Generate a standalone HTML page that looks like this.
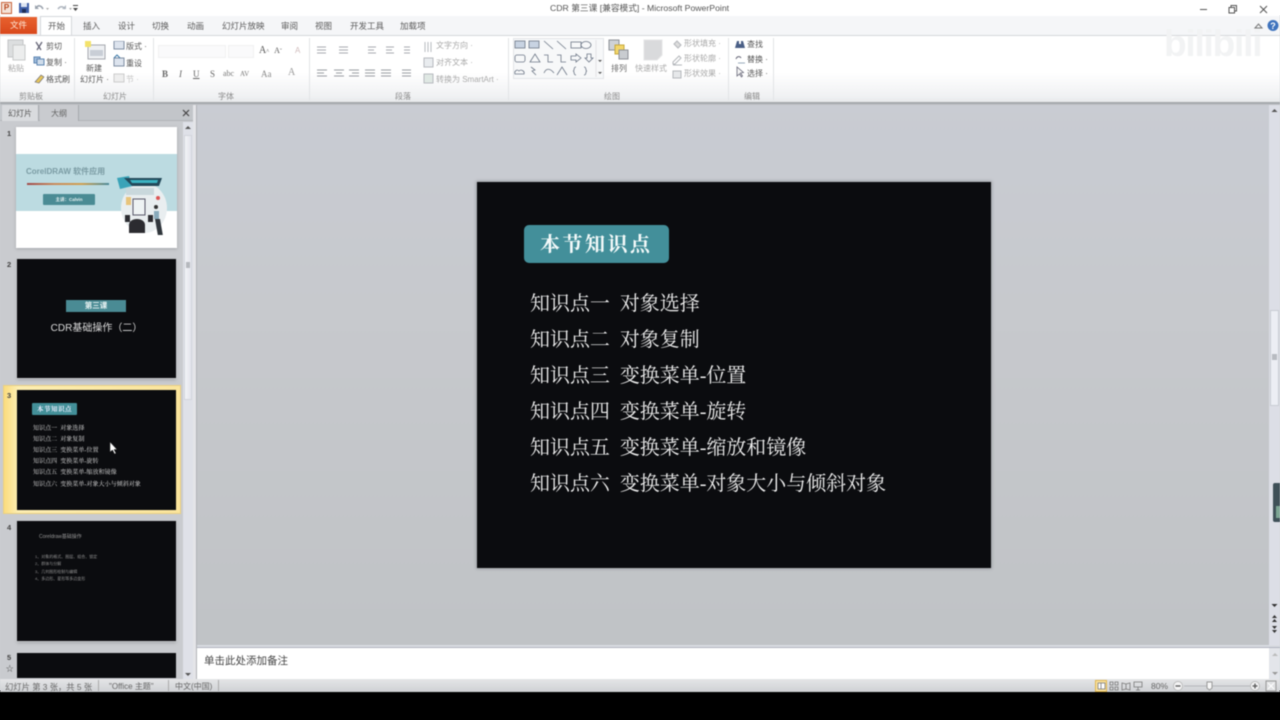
<!DOCTYPE html>
<html lang="zh"><head><meta charset="utf-8"><style>
html,body{margin:0;padding:0;height:720px;background:linear-gradient(#fff 0,#fff 15px,#d0d2d6 15px,#d0d2d6 690px,#000 690px,#000 720px)}
#r{position:relative;width:1280px;height:720px;overflow:hidden;background:#c6c8cc;font-family:"Liberation Sans","Noto Sans CJK SC",sans-serif;color:#555;filter:blur(.45px)}
#r div,#r span.a,#r svg{position:absolute}
.t{white-space:nowrap;font-size:8px;line-height:10px;margin-top:1px}
.tab{white-space:nowrap;font-size:8.5px;line-height:12px;top:20px;color:#5a5a5a}
.g{white-space:nowrap;font-size:8px;line-height:10px;top:92px;color:#8a8a8a}
.l{color:#a9a9a9}
.sep{width:1px;top:38px;height:62px;background:#e2e4e6}
.m{font-family:"Liberation Serif","Noto Serif CJK SC",serif;color:#f0f0f0;font-size:20px;line-height:26px;white-space:nowrap;left:530px;letter-spacing:-.03px}
.num{left:6px;font-size:7.5px;font-weight:bold;color:#444;line-height:10px}
.th{left:17px;width:159px;height:119px;background:#0b0c0f;box-shadow:0 0 0 1px #c4c6c9,0 2px 3px #a2a4a8}
.s3{color:#dcdcdc;font-size:6.05px;line-height:7px;white-space:nowrap;left:33px;font-family:"Liberation Serif","Noto Serif CJK SC",serif}
.s4{color:#8f8f8f;font-size:4px;line-height:5px;white-space:nowrap;left:35px}
</style></head><body><div id="r">

<!-- title bar -->
<div style="left:0;top:0;width:1280px;height:16px;background:#fff"></div>
<div style="left:1px;top:2px;width:9px;height:10px;background:#f4e3d8;border:1px solid #c8643a;color:#b8441a;font-size:8px;line-height:10px;text-align:center;font-weight:bold">P</div>
<svg style="left:19px;top:2px" width="60" height="12" viewBox="0 0 60 12"><rect x="0" y="1" width="10" height="10" fill="#3f5fa8"/><rect x="2" y="1" width="6" height="4" fill="#dfe6f2"/><rect x="3" y="7" width="4" height="4" fill="#1f2f58"/><path d="M17 6c2-3 5-3 7 1" fill="none" stroke="#9aa2ad" stroke-width="1.6"/><path d="M16 3v4h4z" fill="#9aa2ad"/><path d="M46 7c-2-3-5-3-7 0" fill="none" stroke="#b0b7c0" stroke-width="1.6"/><path d="M47 3v4h-4z" fill="#b0b7c0"/><path d="M27 6h3l-1.500 2zM50 6h3l-1.500 2z" fill="#aaa"/></svg>
<svg style="left:72px;top:4px" width="7" height="8" viewBox="0 0 7 8"><path d="M1 1h5v1H1zM1 4h5L3.500 7z" fill="#444"/></svg>
<div class="t" style="left:550px;top:2px;font-size:8.7px;color:#555">CDR 第三课 [兼容模式] - Microsoft PowerPoint</div>
<svg style="left:1190px;top:2px" width="90" height="14" viewBox="0 0 90 14"><path d="M10 7.500h7" stroke="#555" stroke-width="1"/><path d="M39 5.500h5.500v5.500H39zM41 5.500V3.500h5.500V9h-2" fill="none" stroke="#555"/><path d="M70 4l7 7M77 4l-7 7" stroke="#555" stroke-width="1"/></svg>

<!-- tab row -->
<div style="left:0;top:16px;width:1280px;height:19px;background:#f5f6f8"></div>
<div style="left:0;top:17px;width:37px;height:17px;background:linear-gradient(#e8622f,#d9481c);color:#ffe9d8;font-size:8.5px;line-height:17px;text-align:center">文件</div>
<div style="left:40px;top:16px;width:32px;height:20px;background:#fff;border:1px solid #d4d7db;border-bottom:0;box-sizing:border-box"></div>
<div class="tab" style="left:48px">开始</div>
<div class="tab" style="left:83px">插入</div>
<div class="tab" style="left:118px">设计</div>
<div class="tab" style="left:152px">切换</div>
<div class="tab" style="left:187px">动画</div>
<div class="tab" style="left:222px">幻灯片放映</div>
<div class="tab" style="left:281px">审阅</div>
<div class="tab" style="left:315px">视图</div>
<div class="tab" style="left:350px">开发工具</div>
<div class="tab" style="left:400px">加载项</div>
<svg style="left:1250px;top:19px" width="30" height="14" viewBox="0 0 30 14"><path d="M5 9l3.500-4L12 9z" fill="none" stroke="#777"/><circle cx="23" cy="6.500" r="5.500" fill="#3f73bd"/><text x="23" y="10" text-anchor="middle" font-size="9" font-weight="bold" fill="#fff" font-family="Liberation Sans">?</text></svg>

<!-- ribbon -->
<div style="left:0;top:35px;width:1280px;height:68px;background:linear-gradient(#fff 0,#fff 55%,#f0f1f3 90%,#e6e8ea 100%);border-top:1px solid #d5d7da;box-sizing:border-box"></div>
<div style="left:0;top:102px;width:1280px;height:2px;background:#a5a8ac"></div>
<div style="left:0;top:104px;width:1280px;height:1px;background:#bfc2c6"></div>

<!-- bilibili watermark -->
<div style="left:1164px;top:23px;font-size:37px;line-height:42px;font-weight:bold;color:#f2f3f4;letter-spacing:-1.200px;white-space:nowrap">bilibili</div>

<!-- clipboard -->
<svg style="left:7px;top:39px" width="20" height="22" viewBox="0 0 20 22"><rect x="1" y="1" width="15" height="17" fill="#dcdedf" stroke="#c2c4c6"/><rect x="6" y="6" width="12" height="15" fill="#eceded" stroke="#c8caca"/></svg>
<div class="t l" style="left:8px;top:63px">粘贴</div>
<svg style="left:33px;top:41px" width="12" height="44" viewBox="0 0 12 44"><path d="M3 1l5 8M9 1L4 9" stroke="#667" stroke-width="1.300"/><rect x="1" y="16" width="6" height="6" fill="#9dbbdc" stroke="#5d84b0"/><rect x="4" y="18" width="7" height="6" fill="#cfdcea" stroke="#5d84b0"/><path d="M2 41l6-7 3 2-5 6z" fill="#e5c55b" stroke="#667" stroke-width=".6"/></svg>
<div class="t" style="left:46px;top:41px">剪切</div>
<div class="t" style="left:46px;top:57px">复制 ·</div>
<div class="t" style="left:46px;top:74px">格式刷</div>
<div class="g" style="left:19px">剪贴板</div>
<div class="sep" style="left:74px"></div>

<!-- slides -->
<svg style="left:84px;top:40px" width="22" height="20" viewBox="0 0 22 20"><rect x="4" y="5" width="17" height="14" fill="#eef0f3" stroke="#a5a8ae"/><rect x="6" y="10" width="13" height="6" fill="#c9ced6"/><path d="M1 1h6v6H1z" fill="#f3e26b"/></svg>
<div class="t" style="left:86px;top:63px;color:#555">新建</div>
<div class="t" style="left:80px;top:74px">幻灯片 ·</div>
<svg style="left:113px;top:41px" width="12" height="46" viewBox="0 0 12 46"><rect x="1" y="0" width="10" height="8" fill="#dde4ee" stroke="#7f8ea3"/><rect x="1" y="17" width="10" height="8" fill="#dde4ee" stroke="#7f8ea3"/><path d="M1 17l3-3 3 3" fill="none" stroke="#3c78a8"/><rect x="1" y="33" width="10" height="8" fill="#eee" stroke="#ccc"/></svg>
<div class="t" style="left:126px;top:41px">版式 ·</div>
<div class="t" style="left:126px;top:58px">重设</div>
<div class="t l" style="left:126px;top:74px;color:#c5c5c5">节 ·</div>
<div class="g" style="left:103px">幻灯片</div>
<div class="sep" style="left:153px"></div>

<!-- font -->
<div style="left:158px;top:45px;width:68px;height:13px;background:#fafafb;border:1px solid #f0f1f2;box-sizing:border-box"></div>
<div style="left:228px;top:45px;width:26px;height:13px;background:#fafafb;border:1px solid #f0f1f2;box-sizing:border-box"></div>
<div class="t" style="left:259px;top:45px;font-family:'Liberation Serif',serif;font-size:10px">A<span style="font-size:6px">^</span>&nbsp; <span style="font-size:8px">A</span><span style="font-size:6px">ˇ</span></div>
<div class="t l" style="left:295px;top:45px;color:#d0bcbc">A</div>
<div class="t" style="left:162px;top:68px;font-family:'Liberation Serif',serif;font-size:9px;color:#666"><b>B</b></div>
<div class="t" style="left:179px;top:68px;font-family:'Liberation Serif',serif;font-size:9px;color:#666"><i>I</i></div>
<div class="t" style="left:193px;top:68px;font-family:'Liberation Serif',serif;font-size:9px;color:#666"><u>U</u></div>
<div class="t" style="left:210px;top:68px;font-family:'Liberation Serif',serif;font-size:9px;color:#666">S</div>
<div class="t" style="left:223px;top:68px;font-family:'Liberation Serif',serif;font-size:8px;color:#777">abc</div>
<div class="t" style="left:240px;top:68px;font-family:'Liberation Serif',serif;font-size:7px;color:#777">AV</div>
<div class="t" style="left:261px;top:68px;font-family:'Liberation Serif',serif;font-size:9px;color:#888">Aa</div>
<div class="t" style="left:288px;top:67px;font-family:'Liberation Serif',serif;font-size:10px;color:#999">A</div>
<div class="g" style="left:218px">字体</div>
<div class="sep" style="left:309px"></div>

<!-- paragraph -->
<svg style="left:316px;top:45px" width="104" height="36" viewBox="0 0 104 36" stroke="#a8abb0" fill="none"><path d="M1 2h9M1 5h9M1 8h9M23 2h9M23 5h9M23 8h9M52 2h8M52 5h6M52 8h8M70 2h8M70 5h6M70 8h8M88 2h6M88 5h6M88 8h6"/><path d="M1 25h10M1 28h7M1 31h10M18 25h10M20 28h6M18 31h10M33 25h10M36 28h7M33 31h10M49 25h10M49 28h10M49 31h10M65 25h10M65 28h10M65 31h10M86 25h9M86 28h9M86 31h9" stroke="#9a9da3"/></svg>
<svg style="left:423px;top:41px" width="12" height="46" viewBox="0 0 12 46" fill="none" stroke="#b7babf"><path d="M2 1v10M5 1v10M8 1v10"/><rect x="1" y="17" width="9" height="9" fill="#e9ecef"/><rect x="1" y="33" width="9" height="9" fill="#dfe8e3"/></svg>
<div class="t l" style="left:436px;top:40px">文字方向 ·</div>
<div class="t l" style="left:436px;top:57px">对齐文本 ·</div>
<div class="t l" style="left:436px;top:74px">转换为 SmartArt ·</div>
<div class="g" style="left:395px">段落</div>
<div class="sep" style="left:508px"></div>

<!-- shapes gallery -->
<div style="left:513px;top:38px;width:91px;height:41px;background:#f7f8f9;border:1px solid #e3e5e8;box-sizing:border-box"></div>
<svg style="left:514px;top:40px" width="92" height="38" viewBox="0 0 92 38" fill="none" stroke="#6c7686" stroke-width=".8"><rect x="1" y="1" width="10" height="7" fill="#c8d3e2"/><rect x="15" y="1" width="10" height="7" fill="#c8d3e2"/><path d="M30 1l9 8M43 1l9 8"/><rect x="57" y="2" width="10" height="6"/><ellipse cx="72" cy="5" rx="5" ry="3.500"/><rect x="1" y="15" width="10" height="7" rx="2"/><path d="M16 22l5-8 5 8zM30 15h4v7h5M43 15h4v7h5M57 16h5v-2l5 4-5 4v-2h-5zM73 14h4v4h2l-4 4-4-4h2z"/><path d="M1 34c-1-3 2-5 4-3 2-2 6 0 5 3zM17 27l4 3-3 1 4 4M30 33c2-5 6-5 10 0M43 35l5-8 5 8M62 27c-3 0-1 4-3 4 2 0 0 4 3 4M70 27c3 0 1 4 3 4-2 0 0 4-3 4"/><path d="M82 -2v39" stroke="#dcdfe3"/><path d="M84 20h4l-2 2zM84 32h4l-2 2z" fill="#555" stroke="none"/></svg>
<svg style="left:608px;top:38px" width="22" height="24" viewBox="0 0 22 24"><rect x="1" y="2" width="10" height="10" fill="#cfd2d6" stroke="#8d9096"/><rect x="7" y="7" width="9" height="9" fill="#f3d66a" stroke="#c7a83d"/><rect x="11" y="12" width="9" height="9" fill="#c9ccd0" stroke="#8d9096"/></svg>
<div class="t" style="left:611px;top:63px;color:#666">排列</div>
<svg style="left:641px;top:38px" width="24" height="24" viewBox="0 0 24 24"><path d="M3 2h18v15l-5 5H3z" fill="#d9dadc" stroke="#e4e5e6"/></svg>
<div class="t l" style="left:635px;top:63px">快速样式</div>
<svg style="left:672px;top:39px" width="11" height="42" viewBox="0 0 11 42" fill="none" stroke="#b4b7bb"><path d="M2 5l3-3 4 4-3 3z" fill="#ddd"/><path d="M1 23l6-6 2 2-6 6h-2zM1 26h9"/><rect x="1" y="32" width="8" height="7" fill="#e6e8ea"/></svg>
<div class="t l" style="left:684px;top:38px">形状填充 ·</div>
<div class="t l" style="left:684px;top:53px">形状轮廓 ·</div>
<div class="t l" style="left:684px;top:68px">形状效果 ·</div>
<div class="g" style="left:604px">绘图</div>
<div class="sep" style="left:728px"></div>

<!-- edit -->
<svg style="left:734px;top:39px" width="12" height="40" viewBox="0 0 12 40" fill="none"><path d="M1 9l2-7h2v3h2V2h2l2 7z" fill="#4a5f86"/><path d="M2 20c1-3 4-3 5-1" stroke="#667"/><path d="M4 24h7" stroke="#9ab"/><path d="M3 28l0 9 2.500-2 2 3 1-1-2-3 3-.5z" fill="#f5f5f5" stroke="#667" stroke-width=".8"/></svg>
<div class="t" style="left:747px;top:39px">查找</div>
<div class="t" style="left:747px;top:54px">替换 ·</div>
<div class="t" style="left:747px;top:68px">选择 ·</div>
<div class="g" style="left:744px">编辑</div>
<div class="sep" style="left:773px"></div>

<!-- left pane -->
<div style="left:0;top:105px;width:195px;height:574px;background:#c9cbcf"></div>
<div style="left:0;top:105px;width:193px;height:16px;background:#c2c5c9;border-bottom:1px solid #b1b4b8;box-sizing:border-box"></div>
<div style="left:2px;top:105px;width:37px;height:16px;background:#d9dbde;border-right:1px solid #a6a9ad;box-sizing:border-box;font-size:8px;line-height:17px;text-align:center;color:#555">幻灯片</div>
<div style="left:40px;top:105px;width:39px;height:16px;background:#c9cbcf;border-right:1px solid #a6a9ad;box-sizing:border-box;font-size:8px;line-height:17px;text-align:center;color:#666">大纲</div>
<svg style="left:182px;top:109px" width="8" height="8" viewBox="0 0 8 8"><path d="M1 1l6 6M7 1L1 7" stroke="#444" stroke-width="1.200"/></svg>

<!-- scrollbar left -->
<div style="left:183px;top:122px;width:10px;height:557px;background:#dfe1e8"></div>
<div style="left:184px;top:135px;width:8px;height:265px;background:linear-gradient(90deg,#f2f3f8,#e3e5ec);border:1px solid #d2d5db;box-sizing:border-box"></div>
<div style="left:186px;top:262px;width:4px;height:6px;background:#b5b8bd"></div>
<svg style="left:184px;top:124px" width="8" height="6" viewBox="0 0 8 6"><path d="M1 5l3-3 3 3z" fill="#555"/></svg>
<svg style="left:184px;top:672px" width="8" height="6" viewBox="0 0 8 6"><path d="M1 1l3 3 3-3z" fill="#555"/></svg>
<div style="left:193px;top:105px;width:4px;height:574px;background:#e4e5e8;border-right:1px solid #b0b3b7;box-sizing:border-box"></div>

<!-- thumb 1 -->
<div class="num" style="top:129px;left:7px">1</div>
<div class="th" style="top:127px;left:16px;width:161px;height:121px;background:#fff;box-shadow:0 1px 3px #a2a4a8"></div>
<div style="left:16px;top:154px;width:161px;height:57px;background:#bcdbe1"></div>
<div style="left:26px;top:167px;font-size:8px;line-height:10px;font-weight:bold;color:#7a9ba3;white-space:nowrap">CorelDRAW 软件应用</div>
<div style="left:27px;top:183px;width:82px;height:2px;background:linear-gradient(90deg,#a04a4a,#c98a5a,#d0a050,#4a8a99)"></div>
<div style="left:43px;top:194px;width:52px;height:11px;background:#4a8b94;border-radius:1px;color:#e8f2f2;font-size:4.5px;line-height:11px;text-align:center;font-weight:bold">主讲：Calvin</div>
<svg style="left:112px;top:175px" width="60" height="60" viewBox="0 0 60 60"><ellipse cx="32" cy="33" rx="23" ry="25" fill="#e9eef0"/><path d="M5 3l12-2 3 10-12 3z" fill="#3aa3b8"/><path d="M12 3h38l-3 8H20z" fill="#23495a"/><path d="M18 5h28l-1 3H20z" fill="#3bb3c2"/><rect x="14" y="13" width="28" height="7" fill="#c9d8dc"/><rect x="21" y="24" width="12" height="16" fill="#eef3f4" stroke="#556" stroke-width="1"/><rect x="14" y="22" width="5" height="8" fill="#e8c47b"/><path d="M17 58v-8c0-4 4-6 8-6s8 2 8 6v8z" fill="#2b2b30"/><rect x="13" y="40" width="5" height="7" fill="#2b2b30"/><rect x="36" y="40" width="5" height="7" fill="#2b2b30"/><circle cx="46" cy="23" r="2" fill="#d55"/><circle cx="44" cy="32" r="2" fill="#333"/><rect x="42" y="36" width="5" height="8" fill="#8ab"/><path d="M43 44h5l3 17h-5z" fill="#30363c"/></svg>

<!-- thumb 2 -->
<div class="num" style="top:260px;left:7px">2</div>
<div class="th" style="top:259px"></div>
<div style="left:66px;top:300px;width:60px;height:12px;background:#4a8b94;color:#e8f2f2;font-size:7.500px;line-height:12px;text-align:center;font-weight:bold">第三课</div>
<div style="left:17px;top:322px;width:159px;font-size:10px;line-height:13px;color:#dcdcdc;text-align:center;white-space:nowrap">CDR基础操作（二）</div>

<!-- thumb 3 -->
<div style="left:3px;top:385px;width:178px;height:129px;background:linear-gradient(90deg,#fbdc7d 0,#fdeeb2 8%,#fbe59c 100%);border:1px solid #e9cf83;box-sizing:border-box"></div>
<div class="num" style="top:391px;left:7px">3</div>
<div class="th" style="top:390px;height:120px;box-shadow:none"></div>
<div style="left:32px;top:403px;width:45px;height:12px;background:#438f98;border-radius:1px;color:#eef;font-size:6.500px;line-height:13px;text-align:center;font-family:'Liberation Serif','Noto Serif CJK SC',serif;font-weight:bold;letter-spacing:.5px">本节知识点</div>
<div class="s3" style="top:426px">知识点一&nbsp; 对象选择</div>
<div class="s3" style="top:437px">知识点二&nbsp; 对象复制</div>
<div class="s3" style="top:448px">知识点三&nbsp; 变换菜单-位置</div>
<div class="s3" style="top:459px">知识点四&nbsp; 变换菜单-旋转</div>
<div class="s3" style="top:470px">知识点五&nbsp; 变换菜单-缩放和镜像</div>
<div class="s3" style="top:482px">知识点六&nbsp; 变换菜单-对象大小与倾斜对象</div>
<svg style="left:109px;top:441px" width="10" height="14" viewBox="0 0 10 14"><path d="M1 1v10l2.500-2 2 4 1.500-.7-2-3.800H8z" fill="#fff" stroke="#222" stroke-width=".5"/></svg>

<!-- thumb 4 -->
<div class="num" style="top:523px;left:7px">4</div>
<div class="th" style="top:521px;height:120px"></div>
<div class="s4" style="left:39px;top:534px;font-size:5px;line-height:6px;color:#999">Coreldraw基础操作</div>
<div class="s4" style="top:554px">1、对象的格式、图层、组合、锁定</div>
<div class="s4" style="top:561px">2、群体与分解</div>
<div class="s4" style="top:569px">3、几何图形绘制与编辑</div>
<div class="s4" style="top:576px">4、多边形、星形等多边变形</div>

<!-- thumb 5 -->
<div class="num" style="top:653px;left:7px">5</div>
<div class="num" style="top:664px;left:6px;font-weight:normal">☆</div>
<div style="left:17px;top:653px;width:159px;height:25px;background:#0b0c0f"></div>

<!-- main -->
<div style="left:197px;top:105px;width:1073px;height:540px;background:linear-gradient(#c9ccd3 0,#c7c9cd 40%,#c0c3c6 100%)"></div>
<div style="left:477px;top:182px;width:514px;height:386px;background:#0b0c0f;box-shadow:0 0 3px 1px #9da0a4"></div>
<div style="left:524px;top:225px;width:145px;height:38px;background:#438f9a;border-radius:5px"></div>
<div style="left:540px;top:232px;font-family:'Liberation Serif','Noto Serif CJK SC',serif;font-weight:bold;font-size:20px;line-height:26px;letter-spacing:2.500px;color:#f4fafa;white-space:nowrap">本节知识点</div>
<div class="m" style="top:291px">知识点一&nbsp;&nbsp;对象选择</div>
<div class="m" style="top:327px">知识点二&nbsp;&nbsp;对象复制</div>
<div class="m" style="top:363px">知识点三&nbsp;&nbsp;变换菜单-位置</div>
<div class="m" style="top:399px">知识点四&nbsp;&nbsp;变换菜单-旋转</div>
<div class="m" style="top:435px">知识点五&nbsp;&nbsp;变换菜单-缩放和镜像</div>
<div class="m" style="top:471px">知识点六&nbsp;&nbsp;变换菜单-对象大小与倾斜对象</div>

<!-- right scrollbar -->
<div style="left:1269px;top:105px;width:11px;height:574px;background:#dcdee6"></div>
<div style="left:1270px;top:310px;width:9px;height:96px;background:#eceef4;border:1px solid #c9ccd3;box-sizing:border-box"></div>
<div style="left:1272px;top:354px;width:5px;height:6px;background:#b8bbc1"></div>
<svg style="left:1270px;top:107px" width="9" height="6" viewBox="0 0 9 6"><path d="M1.500 5l3-3 3 3z" fill="#555"/></svg>
<div style="left:1273px;top:483px;width:7px;height:39px;background:#3f5058;border-radius:2px 0 0 2px"></div>
<div style="left:1276px;top:506px;width:4px;height:12px;background:#7da594"></div>
<svg style="left:1270px;top:602px" width="9" height="40" viewBox="0 0 9 40"><path d="M1.500 2l3 3 3-3zM2 16l2.500-3L7 16zM2 20l2.500-3L7 20z M2 24l2.500 3L7 24zM2 28l2.500 3L7 28z" fill="#333"/></svg>

<!-- notes -->
<div style="left:197px;top:645px;width:1083px;height:3px;background:#d9dce2;border-bottom:1px solid #aeb2bd;box-sizing:border-box"></div>
<div style="left:197px;top:648px;width:1073px;height:31px;background:#fff"></div>
<div style="left:204px;top:654px;font-size:10.500px;line-height:14px;color:#444;white-space:nowrap">单击此处添加备注</div>
<div style="left:1269px;top:648px;width:11px;height:31px;background:#e3e5ea"></div>
<svg style="left:1271px;top:651px" width="8" height="26" viewBox="0 0 8 26"><path d="M1 5l3-3 3 3z" fill="#bbb"/><path d="M1 21l3 3 3-3z" fill="#999"/></svg>

<!-- status -->
<div style="left:0;top:679px;width:1280px;height:13px;background:linear-gradient(#e4e5e7,#cfd1d4)"></div>
<div style="left:0;top:692px;width:1280px;height:28px;background:#000"></div>
<div class="t" style="left:5px;top:681px;color:#666;font-size:8.300px">幻灯片 第 3 张，共 5 张</div>
<div style="left:98px;top:680px;width:1px;height:11px;background:#aaa"></div>
<div class="t" style="left:109px;top:681px;color:#666;font-size:8px">"Office 主题"</div>
<div style="left:168px;top:680px;width:1px;height:11px;background:#aaa"></div>
<div class="t" style="left:175px;top:681px;color:#666;font-size:8px">中文(中国)</div>
<div style="left:218px;top:680px;width:1px;height:11px;background:#aaa"></div>
<div style="left:1095px;top:680px;width:12px;height:12px;background:#fbe3a0;border:1px solid #e0b64f;box-sizing:border-box"></div>
<svg style="left:1096px;top:681px" width="90" height="10" viewBox="0 0 90 10" fill="none" stroke="#777" stroke-width=".8"><rect x="2" y="2" width="7" height="6" fill="#fff"/><path d="M5 2v6"/><path d="M14 1h3v3h-3zM19 1h3v3h-3zM14 6h3v3h-3zM19 6h3v3h-3z"/><path d="M26 2l4 1 4-1v7l-4-1-4 1zM30 3v5"/><path d="M38 1h8v5h-8zM42 6v3M40 9h4"/></svg>
<div class="t" style="left:1151px;top:680px;color:#666;font-size:8.500px">80%</div>
<svg style="left:1172px;top:680px" width="108" height="12" viewBox="0 0 108 12"><circle cx="6" cy="6" r="4.500" fill="#f4f4f5" stroke="#bbb"/><path d="M3.500 6h5" stroke="#555" stroke-width="1.300"/><path d="M12 6h66" stroke="#b5b7ba"/><path d="M35 2h5v6l-2.500 2L35 8z" fill="#f7f7f7" stroke="#999"/><circle cx="83" cy="6" r="4.500" fill="#f4f4f5" stroke="#bbb"/><path d="M80.500 6h5M83 3.500v5" stroke="#555" stroke-width="1.300"/><rect x="94" y="1" width="10" height="10" fill="#dfe0e2" stroke="#999"/><path d="M96 3l6 6M102 3l-6 6" stroke="#fff"/></svg>
</div></body></html>
